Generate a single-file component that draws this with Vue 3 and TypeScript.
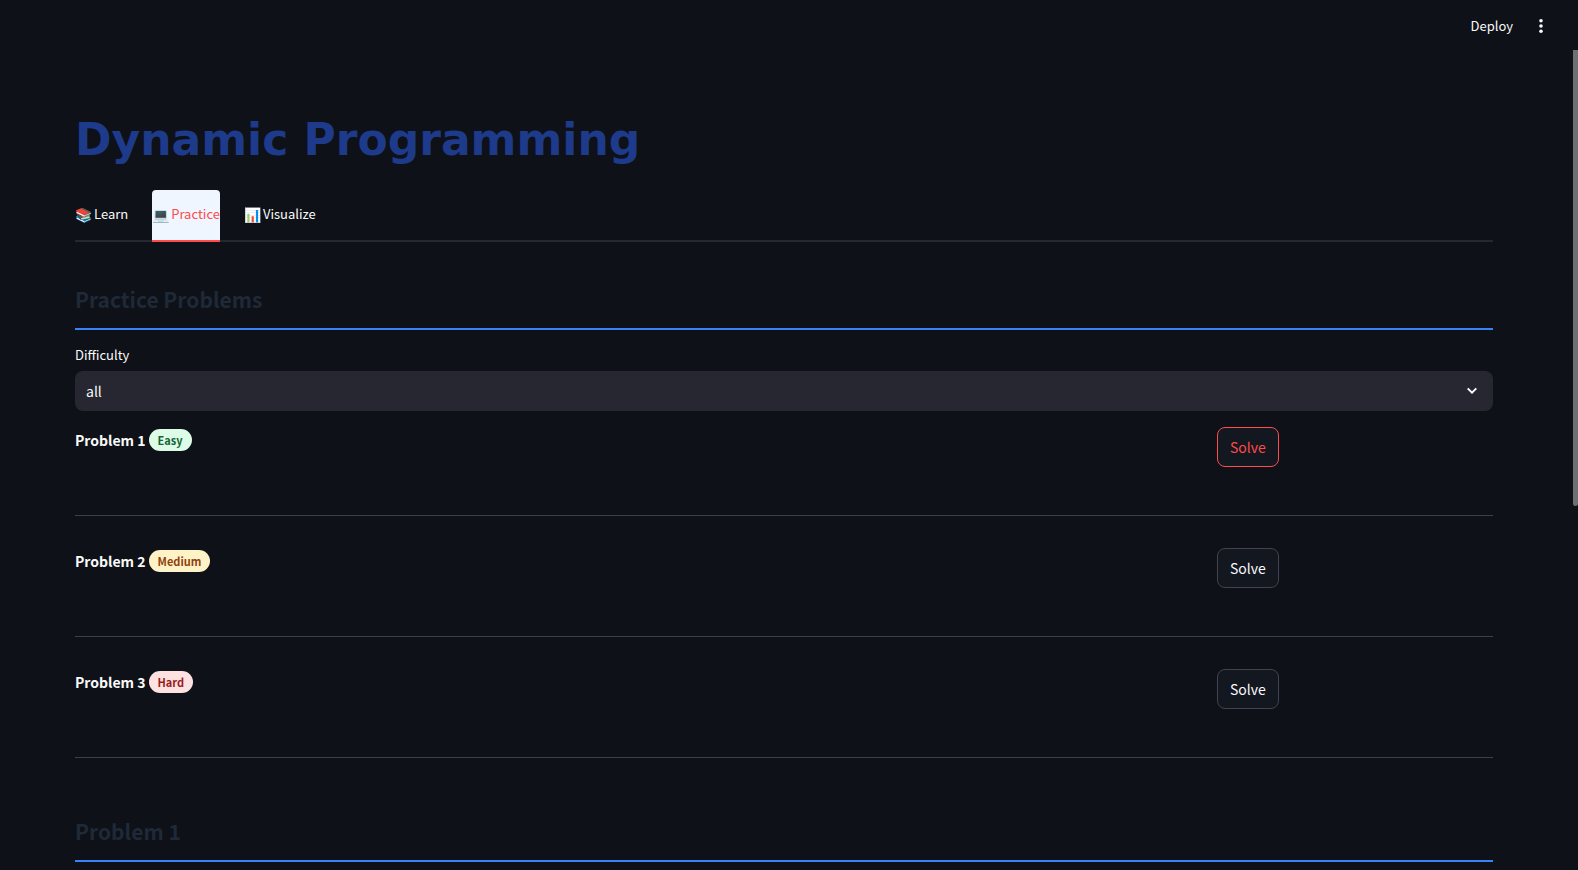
<script setup lang="ts">
import { ref } from 'vue'

interface Tab {
  icon: string
  label: string
}

interface Problem {
  id: number
  level: string
}

const tabs: Tab[] = [
  { icon: '📚', label: 'Learn' },
  { icon: '💻', label: 'Practice' },
  { icon: '📊', label: 'Visualize' },
]

const problems: Problem[] = [
  { id: 1, level: 'Easy' },
  { id: 2, level: 'Medium' },
  { id: 3, level: 'Hard' },
]

const activeTab = ref('Practice')
const difficulty = ref('all')
const selected = ref(1)
</script>

<template>
  <div class="app">
    <header class="toolbar">
      <button class="deploy" type="button">Deploy</button>
      <button class="menu" type="button" aria-label="Main menu">
        <svg width="20" height="20" viewBox="0 0 20 20" fill="currentColor" aria-hidden="true">
          <circle cx="10" cy="4.7" r="1.8" />
          <circle cx="10" cy="10" r="1.8" />
          <circle cx="10" cy="15.3" r="1.8" />
        </svg>
      </button>
    </header>

    <main class="content">
      <h1>Dynamic Programming</h1>

      <div class="tabs" role="tablist">
        <button
          v-for="tab in tabs"
          :key="tab.label"
          class="tab"
          :class="{ active: tab.label === activeTab }"
          type="button"
          role="tab"
          :aria-selected="tab.label === activeTab"
          @click="activeTab = tab.label"
        >
          <span class="icon">{{ tab.icon }}</span>
          <span>{{ tab.label }}</span>
        </button>
      </div>

      <h2>Practice Problems</h2>

      <label class="field-label" for="difficulty">Difficulty</label>
      <div class="select-box">
        <select id="difficulty" v-model="difficulty">
          <option>all</option>
          <option>easy</option>
          <option>medium</option>
          <option>hard</option>
        </select>
        <svg class="chevron" width="10" height="8" viewBox="0 0 10 8" fill="none" stroke="currentColor" stroke-width="2" aria-hidden="true">
          <path d="M0.7 1.4L5 5.7L9.3 1.4" />
        </svg>
      </div>

      <section v-for="problem in problems" :key="problem.id" class="problem">
        <p class="name">
          <strong>Problem {{ problem.id }}</strong>
          <span class="badge" :class="problem.level.toLowerCase()">{{ problem.level }}</span>
        </p>
        <div>
          <button
            class="solve"
            :class="{ current: problem.id === selected }"
            type="button"
            @click="selected = problem.id"
          >Solve</button>
        </div>
      </section>

      <h2>Problem {{ selected }}</h2>
    </main>

    <div class="scroll-thumb" aria-hidden="true"></div>
  </div>
</template>

<style>
body {
  margin: 0;
  background: #0e1117;
}
</style>

<style scoped>
.app {
  height: 100vh;
  overflow: hidden;
  box-sizing: border-box;
  padding-right: 5px;
  background: #0e1117;
  color: #fafafa;
  font-family: "Noto Sans CJK JP", "Noto Sans", sans-serif;
  font-size: 14px;
  line-height: 24px;
}

button,
select {
  font: inherit;
  color: inherit;
  margin: 0;
  border: 0;
  padding: 0;
  background: none;
  cursor: pointer;
}

.toolbar {
  height: 52px;
  display: flex;
  align-items: center;
  justify-content: flex-end;
  gap: 18px;
  padding-right: 22px;
}

.deploy {
  font-size: 13px;
}

.menu {
  display: flex;
}

.content {
  padding: 60px 80px 0 75px;
}

h1 {
  margin: 0 0 22px;
  color: #1e3a8a;
  font: 700 44px/56px "DejaVu Sans", sans-serif;
}

.tabs {
  display: flex;
  gap: 24px;
  margin-bottom: 38px;
  box-shadow: inset 0 -2px #262730;
}

.tab {
  display: flex;
  align-items: center;
  gap: 2px;
  height: 52px;
  padding-bottom: 4px;
  font-size: 13px;
  white-space: nowrap;
}

.icon {
  font-size: 14px;
}

.tab.active {
  background: #eff6ff;
  color: #ff4b4b;
  border-radius: 4px 4px 0 0;
  box-shadow: inset 0 -2px #ff4b4b;
}

h2 {
  margin: 0 0 15px;
  padding: 3px 0 13px;
  border-bottom: 2px solid #3b82f6;
  color: #1f2937;
  font-size: 21px;
  font-weight: 700;
  line-height: 32px;
}

.field-label {
  display: block;
  margin-bottom: 6px;
  font-size: 13px;
  line-height: 20px;
}

.select-box {
  display: grid;
  align-items: center;
  margin-bottom: 16px;
  border-radius: 8px;
  background: #262730;
}

.select-box > * {
  grid-area: 1 / 1;
}

select {
  appearance: none;
  width: 100%;
  height: 40px;
  padding: 0 11px;
  border-radius: 8px;
}

option {
  background: #262730;
}

.chevron {
  justify-self: end;
  margin-right: 16px;
  pointer-events: none;
}

.problem {
  display: grid;
  grid-template-columns: 4fr 1fr;
  column-gap: 38px;
  padding-bottom: 48px;
  margin-bottom: 32px;
  border-bottom: 1px solid #3d4045;
}

.problem + h2 {
  margin-top: 54px;
}

.name {
  display: flex;
  align-items: center;
  align-self: start;
  gap: 3px;
  margin: 0;
  padding-top: 1px;
}

.name strong {
  font-weight: 700;
}

.badge {
  padding: 0 9px;
  border-radius: 12px;
  font-size: 11px;
  font-weight: 700;
  line-height: 22px;
}

.easy {
  background: #dcfce7;
  color: #166534;
}

.medium {
  background: #fef3c7;
  color: #92400e;
}

.hard {
  background: #fee2e2;
  color: #991b1b;
}

.solve {
  height: 40px;
  padding: 0 12px 1px;
  border: 1px solid #41444c;
  border-radius: 8px;
  background: #131720;
}

.solve.current {
  border-color: #ff4b4b;
  color: #ff4b4b;
}

.scroll-thumb {
  position: fixed;
  top: 50px;
  right: 0;
  width: 5px;
  height: 456px;
  border-radius: 0 0 3px 3px;
  background: #6e6f73;
}
</style>
